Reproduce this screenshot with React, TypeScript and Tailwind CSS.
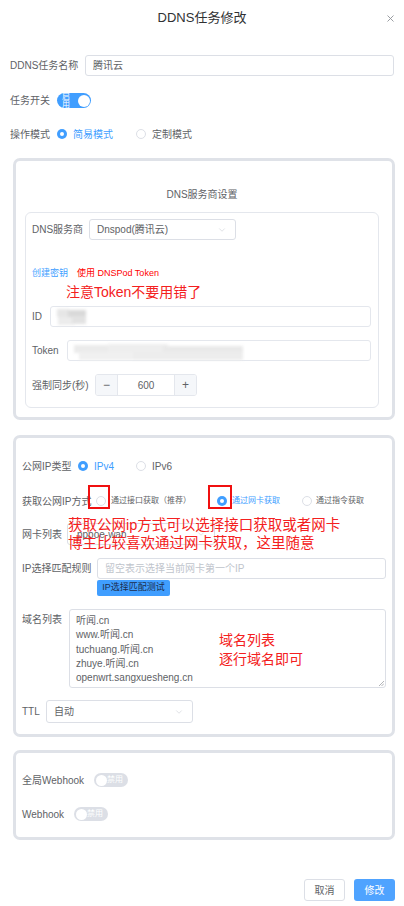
import { ChevronDown } from 'lucide-react';

function Radio({ checked }: { checked?: boolean }) {
  if (checked) {
    return (
      <span className="flex h-[10px] w-[10px] shrink-0 items-center justify-center rounded-full bg-[#409eff]">
        <span className="block h-[4px] w-[4px] rounded-full bg-white" />
      </span>
    );
  }
  return <span className="block h-[10px] w-[10px] shrink-0 rounded-full border border-[#dcdfe6] bg-white" />;
}

function Toggle({ on, label }: { on?: boolean; label: string }) {
  if (on) {
    return (
      <span className="flex h-[15px] w-[34px] items-center justify-between rounded-full bg-[#409eff] pl-[5px] pr-[1.5px]">
        <span className="text-[8px] leading-none text-white">{label}</span>
        <span className="block h-[12px] w-[12px] rounded-full bg-white" />
      </span>
    );
  }
  return (
    <span className="flex h-[14px] w-[34px] items-center justify-between rounded-full bg-[#dcdfe6] pl-[1.5px] pr-[5px]">
      <span className="block h-[11px] w-[11px] rounded-full bg-white" />
      <span className="text-[8px] leading-none text-white">{label}</span>
    </span>
  );
}

function Select({ value, className }: { value: string; className: string }) {
  return (
    <div
      className={`flex items-center justify-between rounded-[3px] border border-[#dcdfe6] bg-white pl-[7px] pr-[8px] text-[10px] text-[#606266] ${className}`}
    >
      <span>{value}</span>
      <ChevronDown size={10} strokeWidth={1.2} color="#c0c4cc" />
    </div>
  );
}

function Blur({ blocks }: { blocks: [number, number, number, string][] }) {
  return (
    <div className="relative h-full w-full blur-[1.5px]">
      {blocks.map(([l, w, t, c], i) => (
        <span
          key={i}
          className="absolute h-[8px]"
          style={{ left: l, width: w, top: t, background: c }}
        />
      ))}
    </div>
  );
}

export default function App() {
  return (
    <div className="relative h-[906px] w-[404px] bg-white font-['Liberation_Sans','Noto_Sans_CJK_SC',sans-serif] text-[#606266]">
      {/* header */}
      <div className="relative flex h-[36px] items-center justify-center text-[13px] text-[#303133]">
        DDNS任务修改
        <svg className="absolute left-[387px] top-[15px]" width="7" height="7" viewBox="0 0 7 7">
          <path d="M0.5 0.5 L6.5 6.5 M6.5 0.5 L0.5 6.5" stroke="#909399" strokeWidth="0.9" />
        </svg>
      </div>

      <div className="px-[10px]">
        <div className="mt-[19px] flex h-[21px] items-center text-[10px]">
          <span className="w-[75px] shrink-0">DDNS任务名称</span>
          <div className="flex h-[21px] flex-1 items-center rounded-[3px] border border-[#dcdfe6] px-[7px]">腾讯云</div>
        </div>

        <div className="mt-[17px] flex h-[15px] items-center text-[10px]">
          <span className="w-[47px] shrink-0">任务开关</span>
          <Toggle on label="启用" />
        </div>

        <div className="mt-[19px] flex h-[14px] items-center text-[10px]">
          <span className="w-[47px] shrink-0">操作模式</span>
          <Radio checked />
          <span className="ml-[6px] text-[#409eff]">简易模式</span>
          <span className="ml-[23px] flex">
            <Radio />
          </span>
          <span className="ml-[6px]">定制模式</span>
        </div>

        {/* DNS provider panel */}
        <div className="ml-[3px] mr-[-1px] mt-[17px] rounded-[7px] border-[3px] border-[#dfe2e8] pb-[9px] pl-[9px] pr-[13px] pt-[27px]">
          <div className="h-[14px] text-center text-[10px] leading-[14px]">DNS服务商设置</div>
          <div className="mt-[10px] rounded-[6px] border border-[#e4e7ed] pb-[11px] pl-[6px] pr-[7px] pt-[6px] text-[10px]">
            <div className="flex h-[21px] items-center">
              <span className="w-[57px] shrink-0">DNS服务商</span>
              <Select value="Dnspod(腾讯云)" className="h-[21px] w-[147px]" />
            </div>
            <div className="mt-[27px] flex h-[12px] items-center text-[9px] leading-[12px]">
              <span className="text-[#409eff]">创建密钥</span>
              <span className="ml-[9px] text-[#f00]">使用 DNSPod Token</span>
            </div>
            <div className="ml-[34px] mt-[4px] h-[18px] text-[14px] leading-[18px] text-[#f42020]">注意Token不要用错了</div>
            <div className="mt-[5px] flex h-[21px] items-center">
              <span className="w-[18px] shrink-0">ID</span>
              <div className="h-[21px] flex-1 rounded-[3px] border border-[#e4e7ed] px-[5px] py-[1px]">
                <Blur
                  blocks={[
                    [1, 12, 1, '#e6e6e6'],
                    [12, 18, 2, '#d9d9d9'],
                    [2, 16, 9, '#ececec'],
                    [16, 14, 8, '#e2e2e2'],
                  ]}
                />
              </div>
            </div>
            <div className="mt-[13px] flex h-[21px] items-center">
              <span className="w-[35px] shrink-0">Token</span>
              <div className="h-[21px] flex-1 rounded-[3px] border border-[#e4e7ed] px-[5px] py-[1px]">
                <Blur
                  blocks={[
                    [1, 40, 3, '#ebebeb'],
                    [35, 60, 2, '#eeeeee'],
                    [90, 80, 4, '#e9e9e9'],
                    [6, 60, 10, '#f0f0f0'],
                    [60, 110, 10, '#ededed'],
                  ]}
                />
              </div>
            </div>
            <div className="mt-[13px] flex h-[22px] items-center">
              <span className="w-[63px] shrink-0">强制同步(秒)</span>
              <div className="flex h-[22px] w-[102px] overflow-hidden rounded-[3px] border border-[#e4e7ed]">
                <span className="flex w-[22px] items-center justify-center border-r border-[#e4e7ed] bg-[#f5f7fa] text-[12px] text-[#606266]">−</span>
                <span className="flex flex-1 items-center justify-center">600</span>
                <span className="flex w-[22px] items-center justify-center border-l border-[#e4e7ed] bg-[#f5f7fa] text-[12px] text-[#606266]">+</span>
              </div>
            </div>
          </div>
        </div>

        {/* IP panel */}
        <div className="relative ml-[3px] mr-[-1px] mt-[15px] rounded-[7px] border-[3px] border-[#dfe2e8] pb-[11px] pl-[6px] pr-[6px] pt-[18px] text-[10px]">
          <div className="flex h-[20px] items-center">
            <span className="w-[56px] shrink-0">公网IP类型</span>
            <Radio checked />
            <span className="ml-[6px] text-[#409eff]">IPv4</span>
            <span className="ml-[22px] flex">
              <Radio />
            </span>
            <span className="ml-[6px]">IPv6</span>
          </div>
          <div className="mt-[15px] flex h-[20px] items-center">
            <span className="w-[74px] shrink-0">获取公网IP方式</span>
            <Radio />
            <span className="ml-[5px] text-[8px]">通过接口获取（推荐）</span>
            <span className="ml-[26px] flex">
              <Radio checked />
            </span>
            <span className="ml-[5px] text-[8px] text-[#409eff]">通过网卡获取</span>
            <span className="ml-[22px] flex">
              <Radio />
            </span>
            <span className="ml-[4px] text-[8px]">通过指令获取</span>
          </div>
          <div className="mt-[12px] flex h-[22px] items-center">
            <span className="w-[45px] shrink-0">网卡列表</span>
            <Select value="pppoe-wan" className="h-[22px] w-[148px] pl-[9px]" />
          </div>
          <div className="mt-[13px] flex h-[21px] items-center">
            <span className="w-[75px] shrink-0">IP选择匹配规则</span>
            <div className="flex h-[21px] flex-1 items-center rounded-[3px] border border-[#dcdfe6] px-[7px] text-[#c0c4cc]">
              留空表示选择当前网卡第一个IP
            </div>
          </div>
          <div className="ml-[75px] mt-[1px] flex h-[16px] w-[73px] items-center justify-center rounded-[2px] bg-[#409eff] text-[9px] text-[#1c2c4c]">
            IP选择匹配测试
          </div>
          <div className="mt-[13px] flex">
            <span className="w-[47px] shrink-0 pt-[4px] leading-[14px]">域名列表</span>
            <div className="relative h-[79px] flex-1 rounded-[3px] border border-[#dcdfe6] px-[6px] pt-[4px] leading-[14.3px]">
              <div>听闻.cn</div>
              <div>www.听闻.cn</div>
              <div>tuchuang.听闻.cn</div>
              <div>zhuye.听闻.cn</div>
              <div>openwrt.sangxuesheng.cn</div>
              <div className="absolute left-[149px] top-[21px] text-[14px] leading-[19px] text-[#f42020]">
                <div>域名列表</div>
                <div>逐行域名即可</div>
              </div>
              <svg className="absolute bottom-[1px] right-[1px]" width="6" height="6" viewBox="0 0 6 6">
                <path d="M1 6 L6 1 M3.5 6 L6 3.5" stroke="#909399" strokeWidth="0.7" />
              </svg>
            </div>
          </div>
          <div className="mt-[12px] flex h-[23px] items-center">
            <span className="w-[24px] shrink-0">TTL</span>
            <Select value="自动" className="h-[23px] w-[147px]" />
          </div>

          {/* annotation overlays */}
          <span className="absolute left-[72px] top-[47px] h-[24px] w-[22px] border-2 border-[#f01010]" />
          <span className="absolute left-[192px] top-[47px] h-[24px] w-[24px] border-2 border-[#f01010]" />
          <div className="absolute left-[52px] top-[78px] whitespace-nowrap text-[14.5px] leading-[18px] text-[#f42020]">
            <div>获取公网ip方式可以选择接口获取或者网卡</div>
            <div>博主比较喜欢通过网卡获取，这里随意</div>
          </div>
        </div>

        {/* webhook panel */}
        <div className="ml-[3px] mr-[-1px] mt-[13px] rounded-[7px] border-[3px] border-[#dfe2e8] pb-[16px] pl-[6px] pt-[20px] text-[10px]">
          <div className="flex h-[14px] items-center">
            <span className="w-[72px] shrink-0">全局Webhook</span>
            <Toggle label="禁用" />
          </div>
          <div className="mt-[20px] flex h-[14px] items-center">
            <span className="w-[52px] shrink-0">Webhook</span>
            <Toggle label="禁用" />
          </div>
        </div>
      </div>

      <div className="mt-[39px] flex justify-end gap-[9px] pr-[9px] text-[10px]">
        <span className="flex h-[22px] w-[41px] items-center justify-center rounded-[3px] border border-[#dcdfe6] text-[#606266]">取消</span>
        <span className="flex h-[22px] w-[41px] items-center justify-center rounded-[3px] bg-[#4fa3ff] text-white">修改</span>
      </div>
    </div>
  );
}
